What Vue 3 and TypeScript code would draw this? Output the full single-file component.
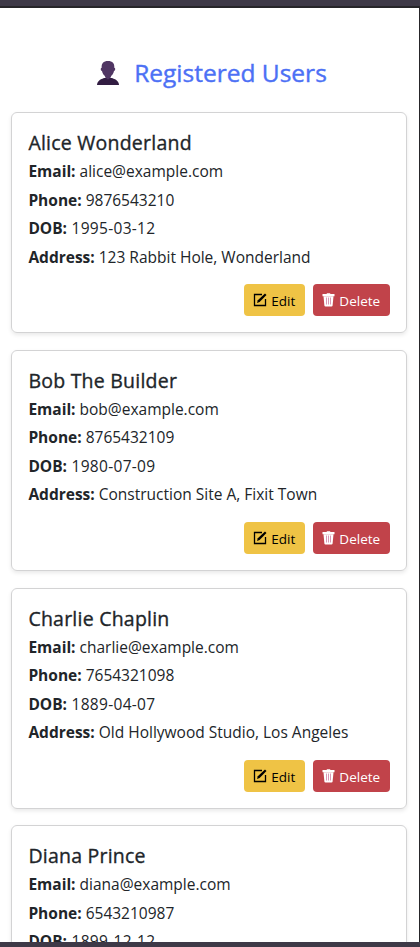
<script setup lang="ts">
interface User {
  name: string
  email: string
  phone: string
  dob: string
  address: string
}

const users: User[] = [
  { name: 'Alice Wonderland', email: 'alice@example.com', phone: '9876543210', dob: '1995-03-12', address: '123 Rabbit Hole, Wonderland' },
  { name: 'Bob The Builder', email: 'bob@example.com', phone: '8765432109', dob: '1980-07-09', address: 'Construction Site A, Fixit Town' },
  { name: 'Charlie Chaplin', email: 'charlie@example.com', phone: '7654321098', dob: '1889-04-07', address: 'Old Hollywood Studio, Los Angeles' },
  { name: 'Diana Prince', email: 'diana@example.com', phone: '6543210987', dob: '1899-12-12', address: '' },
]
</script>

<template>
  <div class="frame">
    <main class="screen">
      <h2 class="heading">
        <svg class="bust" viewBox="0 0 22 24" aria-hidden="true">
          <path fill="#321d42" d="M0 24c.2-3.400 2.300-5.200 7-7h8c4.700 1.800 6.800 3.600 7 7z" />
          <path fill="#503663" d="M11 0c4.600 0 6.600 2.300 6.300 6.700 1.300-.1 1.200 3-.3 3.300-.4 2.200-1.400 3.700-2.700 4.800l-.8 2L11 18.500l-2.500-1.700-.8-2C6.400 13.700 5.400 12.200 5 10 3.500 9.700 3.400 6.600 4.700 6.700 4.400 2.300 6.400 0 11 0z" />
        </svg>
        <span>Registered Users</span>
      </h2>
      <article v-for="user in users" :key="user.email" class="card">
        <h5 class="name">{{ user.name }}</h5>
        <p class="row"><strong>Email:</strong><span>{{ user.email }}</span></p>
        <p class="row"><strong>Phone:</strong><span>{{ user.phone }}</span></p>
        <p class="row"><strong>DOB:</strong><span class="date">{{ user.dob }}</span></p>
        <template v-if="user.address">
          <p class="row"><strong>Address:</strong><span>{{ user.address }}</span></p>
          <div class="actions">
            <button type="button" class="btn edit">
              <svg class="icon" viewBox="0 0 14 14" aria-hidden="true">
                <path d="M9 1.500H1.500v11h11V6" fill="none" stroke="currentColor" stroke-width="1.300" />
                <path d="M4 10l.8-2.700L12 .500 13.500 2 6.600 9.100z" fill="currentColor" />
              </svg>
              <span>Edit</span>
            </button>
            <button type="button" class="btn delete">
              <svg class="icon trash" viewBox="0 0 13 14" aria-hidden="true">
                <path d="M.5 1h4L5 .200h3l.5.800h4v2.300H.5z" fill="#fff" />
                <path d="M1.500 3.300h10l-.9 9.100q-.1 1-1.100 1h-6q-1 0-1.100-1z" fill="#fff" />
                <path d="M4.500 4.500v7M6.500 4.500v7M8.500 4.500v7" stroke="#cf7fa3" stroke-width=".8" />
              </svg>
              <span>Delete</span>
            </button>
          </div>
        </template>
      </article>
    </main>
  </div>
</template>

<style>
body {
  margin: 0;
}
</style>

<style scoped>
.frame {
  box-sizing: border-box;
  height: 947px;
  display: flex;
  flex-direction: column;
  border-top: 6px solid #3e3947;
  border-bottom: 5px solid #3e3947;
  overflow: hidden;
  font-family: "Open Sans", "Noto Sans", sans-serif;
  color: #212529;
}
.screen {
  box-sizing: border-box;
  flex: 1;
  min-height: 0;
  overflow: hidden;
  background: #fff;
  border-top: 2px solid #262529;
  border-right: 1px solid #262529;
  padding: 48px 12px 0 11px;
}
.heading {
  display: flex;
  align-items: center;
  justify-content: center;
  gap: 15px;
  height: 34px;
  margin: 0 0 22px;
  padding-left: 6px;
  font-size: 24.500px;
  font-weight: 500;
  line-height: 34px;
  color: #4c70f5;
  -webkit-text-stroke: 0.4px currentColor;
}
.bust {
  width: 22px;
  height: 24px;
}
.card {
  box-sizing: border-box;
  height: 221px;
  margin-bottom: 16.800px;
  padding: 18px 16px 16px 16.400px;
  border: 1px solid #d3d3d4;
  border-radius: 6px;
  box-shadow: 0 2px 4px rgba(0, 0, 0, 0.09);
}
.name {
  margin: 0 0 2px;
  font-size: 19.500px;
  font-weight: 500;
  line-height: 24px;
  letter-spacing: 0.230px;
  -webkit-text-stroke: 0.35px currentColor;
}
.row {
  display: flex;
  gap: 4px;
  margin: 0;
  font-size: 15.500px;
  line-height: 28.500px;
  white-space: nowrap;
}
.row strong {
  font-weight: 700;
}
.date {
  padding-left: 0.5px;
  letter-spacing: 0.300px;
}
.actions {
  display: flex;
  justify-content: flex-end;
  gap: 8px;
  margin-top: 13px;
}
.btn {
  display: flex;
  align-items: center;
  justify-content: center;
  gap: 4px;
  width: 60.500px;
  height: 32px;
  padding: 0;
  border: 0;
  border-radius: 4px;
  font: 400 13.500px/20px "Open Sans", "Noto Sans", sans-serif;
}
.btn span {
  padding-top: 2px;
}
.edit {
  background: #efc345;
  color: #000;
}
.delete {
  width: 77.500px;
  background: #c1434a;
  color: #fff;
}
.icon {
  width: 14px;
  height: 14px;
}
.trash {
  width: 13px;
}
</style>
